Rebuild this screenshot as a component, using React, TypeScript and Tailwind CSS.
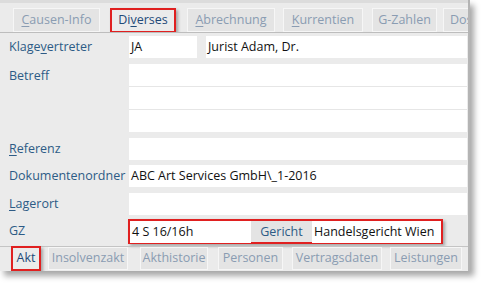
const topTabs = [
  { pre: "", u: "C", post: "ausen-Info", cls: "w-[87px] ml-[13px]" },
  { pre: "Di", u: "v", post: "erses", cls: "w-[66px] ml-[10px]", active: true },
  { pre: "", u: "A", post: "brechnung", cls: "w-[88px] ml-[11px]" },
  { pre: "", u: "K", post: "urrentien", cls: "w-[80px] ml-[8px]" },
  { pre: "G-Zahlen", u: "", post: "", cls: "w-[65px] ml-[9px]" },
  { pre: "Dossier", u: "", post: "", cls: "w-[60px] ml-[6px] justify-start pl-[6px]" },
];

const bottomTabs = [
  { label: "Insolvenzakt", cls: "w-[80px] ml-[7px]" },
  { label: "Akthistorie", cls: "w-[68px] ml-[12px]" },
  { label: "Personen", cls: "w-[65px] ml-[10px]" },
  { label: "Vertragsdaten", cls: "w-[90px] ml-[9px]" },
  { label: "Leistungen", cls: "w-[72px] ml-[8px]" },
  { label: "", cls: "w-[20px] ml-[6px]" },
];

const Label = ({ children }: { children: React.ReactNode }) => (
  <div className="w-[129px] shrink-0 pl-[9px] text-[12.5px] text-[#2d5b86] leading-[20px] whitespace-nowrap">{children}</div>
);

const Field = ({ children, className = "" }: { children?: React.ReactNode; className?: string }) => (
  <div className={`h-[22px] bg-white pl-[2px] text-[12.5px] leading-[22px] text-[#111] whitespace-nowrap ${className}`}>{children}</div>
);

export default function App() {
  return (
    <div className="w-[482px] h-[284px] bg-white overflow-hidden" style={{ fontFamily: '"Open Sans", "Liberation Sans", sans-serif' }}>
      <div className="w-[470px] h-[271px] bg-[#ebebeb] border-r-2 border-[#b4b4b4] shadow-[4px_5px_6px_rgba(0,0,0,0.35)] overflow-hidden flex flex-col">
        {/* top tabs */}
        <div className="h-[3px] bg-[#dcdcdc]" />
        <div className="flex pt-[5px] h-[30px] border-b border-[#bdbdbd] shrink-0 overflow-hidden">
          {topTabs.map((t, i) =>
            t.active ? (
              <div key={i} className={`${t.cls} shrink-0 h-[25px] border-2 border-[#e02020] shadow-[2px_2px_3px_rgba(0,0,0,0.3)] bg-[#ebebeb] flex items-center justify-center text-[12.5px] text-[#1f4a78]`}>
                {t.pre}<span className="underline underline-offset-2">{t.u}</span>{t.post}
              </div>
            ) : (
              <div key={i} className={`${t.cls} shrink-0 h-[24px] border border-[#f6f6f6] bg-[#e4e4e4] flex items-center justify-center text-[12.5px] text-[#8a9cb2] whitespace-nowrap overflow-hidden`}>
                {t.pre}
                {t.u && <span className="underline underline-offset-2">{t.u}</span>}
                {t.post}
              </div>
            )
          )}
        </div>

        {/* form */}
        <div className="flex flex-col pt-[4px] pr-[1px]">
          <div className="flex items-center h-[21px]">
            <Label>Klage<span className="underline underline-offset-2">v</span>ertreter</Label>
            <Field className="w-[68px] h-[21px]">JA</Field>
            <Field className="ml-[9px] flex-1 h-[21px]">Jurist Adam, Dr.</Field>
          </div>

          <div className="flex mt-[6px]">
            <Label><div className="pt-[2px]">Betreff</div></Label>
            <div className="flex-1 flex flex-col gap-[1px] bg-[#e6e6e6]">
              <Field className="h-[21px]" />
              <Field className="h-[21px]" />
              <Field className="h-[21px]" />
            </div>
          </div>

          <div className="flex items-center mt-[6px]">
            <Label><span className="underline underline-offset-2">R</span>eferenz</Label>
            <Field className="flex-1" />
          </div>

          <div className="flex items-center mt-[5px]">
            <Label>Dokumentenordner</Label>
            <Field className="flex-1">ABC Art Services GmbH\_1-2016</Field>
          </div>

          <div className="flex items-center mt-[6px]">
            <Label><span className="underline underline-offset-2">L</span>agerort</Label>
            <Field className="flex-1" />
          </div>

          <div className="flex items-center mt-[4px]">
            <Label>GZ</Label>
            <div className="-ml-[1px] w-[315px] h-[25px] border-2 border-[#e02020] shadow-[2px_2px_3px_rgba(0,0,0,0.3)] flex">
              <Field className="w-[121px] h-[21px]">4 S 16/16h</Field>
              <div className="w-[61px] h-[21px] bg-[#e4e4e4] text-[12.5px] leading-[21px] text-[#2d5b86] text-center">Gericht</div>
              <Field className="flex-1 h-[21px]">Handelsgericht Wien</Field>
            </div>
          </div>
        </div>

        {/* bottom tabs */}
        <div className="mt-[2px] border-t border-[#c4c4c4] flex pl-[11px] h-[26px]">
          <div className="w-[30px] shrink-0 h-[25px] -mt-[1px] border-2 border-[#e02020] shadow-[2px_2px_3px_rgba(0,0,0,0.3)] flex items-center justify-center text-[12.5px] text-[#1f4a78]">
            Akt
          </div>
          {bottomTabs.map((t, i) => (
            <div key={i} className={`${t.cls} shrink-0 h-[23px] border border-[#f6f6f6] bg-[#e4e4e4] flex items-center justify-center text-[12.5px] text-[#8a9cb2] whitespace-nowrap`}>
              {t.label}
            </div>
          ))}
        </div>
      </div>
    </div>
  );
}
